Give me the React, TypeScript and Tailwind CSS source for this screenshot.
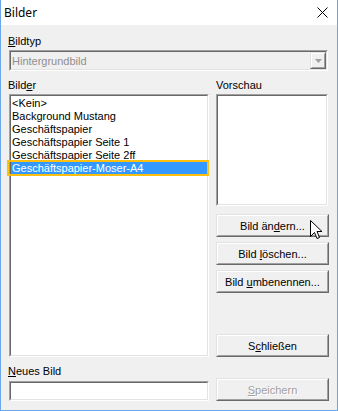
import React from 'react';

const items = [
  'Background Mustang',
  'Geschäftspapier',
  'Geschäftspapier Seite 1',
  'Geschäftspapier Seite 2ff',
];

function Sunken({ className = '', children }: { className?: string; children?: React.ReactNode }) {
  return (
    <div className={`border border-t-[#a0a0a0] border-l-[#a0a0a0] border-r-white border-b-white ${className}`}>
      <div className="h-full border border-t-[#696969] border-l-[#696969] border-r-[#e3e3e3] border-b-[#e3e3e3]">
        {children}
      </div>
    </div>
  );
}

function Button({ children, disabled = false }: { children: React.ReactNode; disabled?: boolean }) {
  return (
    <div className="h-[23px] border border-t-[#e3e3e3] border-l-[#e3e3e3] border-r-[#696969] border-b-[#696969]">
      <div
        className={`h-full flex items-center justify-center border border-t-white border-l-white border-r-[#a0a0a0] border-b-[#a0a0a0] bg-[#f0f0f0] ${
          disabled ? 'text-[#a0a0a0] [text-shadow:1px_1px_0_#fff]' : 'text-black'
        }`}
      >
        <span className="whitespace-pre">{children}</span>
      </div>
    </div>
  );
}

export default function App() {
  return (
    <div className="relative w-[338px] h-[411px] flex flex-col border-x border-b border-[#6aa6e8] bg-[#f0f0f0] font-['Liberation_Sans',Arial,sans-serif] text-[11px] leading-[14px] text-black">
      {/* title bar */}
      <div className="h-[25px] shrink-0 bg-white flex items-center justify-between pl-[3px] pr-[9px]">
        <span className="font-['Noto_Sans',sans-serif] text-[12px]">Bilder</span>
        <svg width="11" height="11" viewBox="0 0 11 11">
          <path d="M0.5 0.5 L10.5 10.5 M10.5 0.5 L0.5 10.5" stroke="#000" strokeWidth="1" />
        </svg>
      </div>

      <div className="flex-1 flex flex-col px-[8px]">
        <div className="mt-[9px] h-[14px] -ml-px">
          <u>B</u>ildtyp
        </div>
        <Sunken className="mt-[2px] h-[21px] w-[319px]">
          <div className="h-full flex items-center bg-[#f0f0f0]">
            <span className="flex-1 pl-[1px] text-[#8f8f8f]">Hintergrundbild</span>
            <div className="h-full w-[16px] border border-t-[#e3e3e3] border-l-[#e3e3e3] border-r-[#696969] border-b-[#696969]">
              <div className="h-full flex items-center justify-center border border-t-white border-l-white border-r-[#a0a0a0] border-b-[#a0a0a0]">
                <svg width="7" height="4" viewBox="0 0 7 4">
                  <path d="M0 0 H7 L3.5 4 Z" fill="#a0a0a0" />
                </svg>
              </div>
            </div>
          </div>
        </Sunken>

        <div className="mt-[7px] flex gap-[7px]">
          {/* left column */}
          <div className="w-[200px] flex flex-col">
            <div className="h-[14px] -ml-px">
              Bild<u>e</u>r
            </div>
            <Sunken className="mt-[2px] h-[263px]">
              <div className="h-full bg-white pt-[1px]">
                <div className="h-[13px] leading-[13px] pl-[1px]">&lt;Kein&gt;</div>
                {items.map((it) => (
                  <div key={it} className="h-[13px] leading-[13px] pl-[1px] whitespace-nowrap">
                    {it}
                  </div>
                ))}
                <div className="relative h-[13px] leading-[13px] pl-[1px] bg-[#3399ff] text-white">
                  Geschäftspapier-Moser-A4
                  <div className="absolute -left-[4px] -right-[2px] -top-[2px] -bottom-[1px] border-2 border-[#ffbf0f]" />
                </div>
              </div>
            </Sunken>
            <div className="mt-[7px] h-[14px] -ml-px">
              <u>N</u>eues Bild
            </div>
            <Sunken className="mt-[3px] h-[20px]">
              <div className="h-full bg-white" />
            </Sunken>
          </div>

          {/* right column */}
          <div className="w-[113px] flex flex-col">
            <div className="h-[14px]">Vorschau</div>
            <Sunken className="mt-[2px] h-[112px] w-[112px]">
              <div className="h-full bg-white" />
            </Sunken>
            <div className="mt-[8px]">
              <Button>
                Bild än<u>d</u>ern...
              </Button>
            </div>
            <div className="mt-[5px]">
              <Button>
                {'Bild '}<u>l</u>öschen...
              </Button>
            </div>
            <div className="mt-[5px]">
              <Button>
                {'Bild '}<u>u</u>mbenennen...
              </Button>
            </div>
            <div className="mt-[41px]">
              <Button>
                S<u>c</u>hließen
              </Button>
            </div>
            <div className="mt-[21px]">
              <Button disabled>
                <u>S</u>peichern
              </Button>
            </div>
          </div>
        </div>
      </div>

      {/* mouse cursor */}
      <svg className="absolute left-[309px] top-[220px]" width="13" height="21" viewBox="0 0 13 21">
        <path
          d="M0.5 0.5 L0.5 16.5 L4.5 12.5 L7 18.5 L9.5 17.5 L7 11.5 L12 11.5 Z"
          fill="#fff"
          stroke="#000"
          strokeWidth="1"
          strokeLinejoin="miter"
        />
      </svg>
    </div>
  );
}
